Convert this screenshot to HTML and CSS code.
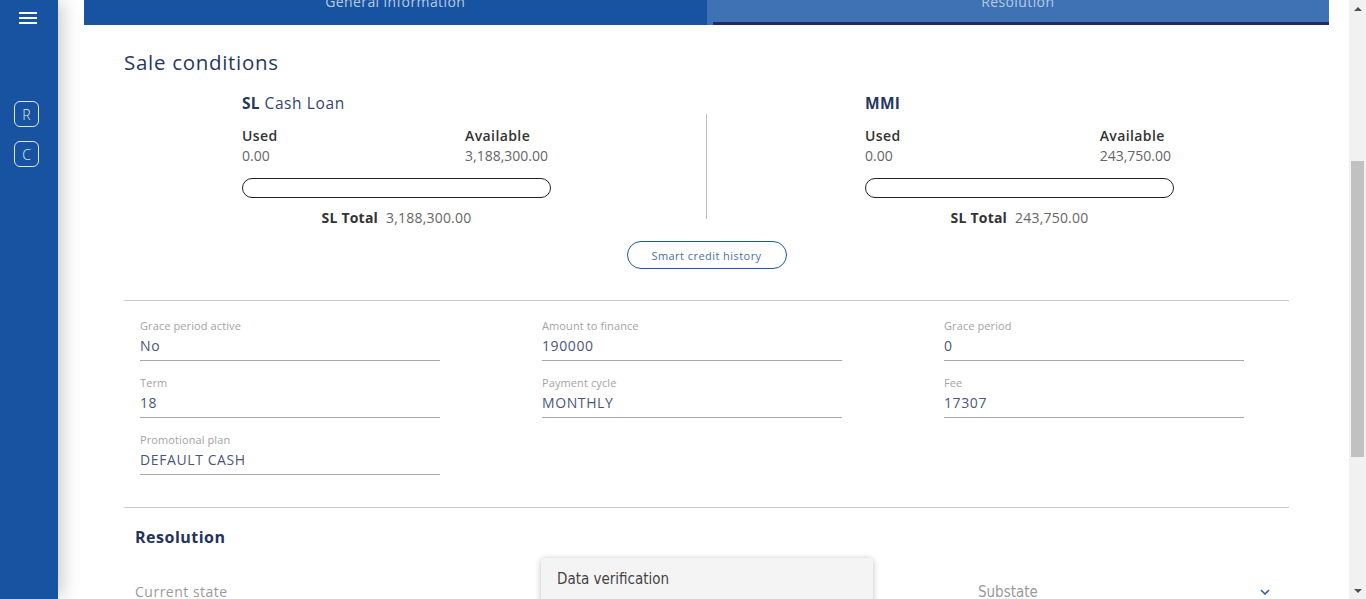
FILE: index.html
```html
<!DOCTYPE html>
<html lang="en">
<head>
<meta charset="utf-8">
<title>Sale conditions</title>
<link rel="stylesheet" href="styles.css">
</head>
<body>
<div class="app">
  <aside class="sidebar">
    <button class="menu-btn" aria-label="Menu">
      <svg width="18" height="13" viewBox="0 0 18 13"><rect x="0" y="0" width="18" height="2" fill="#fff"/><rect x="0" y="5" width="18" height="2" fill="#fff"/><rect x="0" y="10" width="18" height="2" fill="#fff"/></svg>
    </button>
    <div class="side-badges">
      <span class="badge">R</span>
      <span class="badge">C</span>
    </div>
  </aside>

  <main class="main">
    <nav class="tabs">
      <div class="tab tab-general">General information</div>
      <div class="tab tab-resolution">Resolution</div>
    </nav>

    <section class="card">
      <h1 class="title">Sale conditions</h1>

      <div class="limits">
        <div class="limit limit-left">
          <div class="limit-name"><b>SL</b> Cash Loan</div>
          <div class="limit-cols">
            <div class="col"><div class="col-head">Used</div><div class="col-val">0.00</div></div>
            <div class="col"><div class="col-head">Available</div><div class="col-val">3,188,300.00</div></div>
          </div>
          <div class="bar"></div>
          <div class="total"><b>SL Total</b><span>3,188,300.00</span></div>
        </div>
        <div class="vdivider"></div>
        <div class="limit limit-right">
          <div class="limit-name"><b>MMI</b></div>
          <div class="limit-cols">
            <div class="col"><div class="col-head">Used</div><div class="col-val">0.00</div></div>
            <div class="col"><div class="col-head">Available</div><div class="col-val">243,750.00</div></div>
          </div>
          <div class="bar"></div>
          <div class="total"><b>SL Total</b><span>243,750.00</span></div>
        </div>
      </div>

      <div class="btn-row"><button class="outline-btn">Smart credit history</button></div>

      <hr class="divider divider-top">

      <div class="fields">
        <div class="field"><div class="f-label">Grace period active</div><div class="f-value">No</div></div>
        <div class="field"><div class="f-label">Amount to finance</div><div class="f-value">190000</div></div>
        <div class="field"><div class="f-label">Grace period</div><div class="f-value">0</div></div>
        <div class="field"><div class="f-label">Term</div><div class="f-value">18</div></div>
        <div class="field"><div class="f-label">Payment cycle</div><div class="f-value">MONTHLY</div></div>
        <div class="field"><div class="f-label">Fee</div><div class="f-value">17307</div></div>
        <div class="field"><div class="f-label">Promotional plan</div><div class="f-value">DEFAULT CASH</div></div>
      </div>

      <hr class="divider divider-bottom">

      <div class="resolution">
        <h2 class="res-title">Resolution</h2>
        <div class="res-row">
          <div class="res-current">Current state</div>
          <div class="res-sub">
            <span>Substate</span>
            <svg class="chev" width="10" height="6" viewBox="0 0 10 6"><path d="M1 1 L5 5 L9 1" fill="none" stroke="#2f5fa8" stroke-width="1.6"/></svg>
          </div>
          <div class="dropdown"><div class="dd-item">Data verification</div></div>
        </div>
      </div>
    </section>
  </main>

  <div class="scrollbar" aria-hidden="true">
    <div class="sb-btn"><span class="tri-up"></span></div>
    <div class="sb-track"><div class="sb-thumb"></div></div>
    <div class="sb-btn"><span class="tri-down"></span></div>
  </div>
</div>
</body>
</html>
```

FILE: styles.css
```css
* { box-sizing: border-box; }
html, body { margin: 0; padding: 0; height: 100%; overflow: hidden; background: #fff; }
body { font-family: "Open Sans", "Noto Sans", sans-serif; color: #333; }

.app { display: flex; height: 599px; }

/* Sidebar */
.sidebar {
  width: 58px; flex: 0 0 58px; background: #1753a0;
  display: flex; flex-direction: column; align-items: flex-start; padding-left: 14px;
  box-shadow: 6px 0 18px -2px rgba(0,0,0,0.22);
  position: relative; z-index: 2;
}
.menu-btn { background: none; border: 0; padding: 0; margin: 12px 0 0 5px; width: 18px; height: 13px; display: block; }
.menu-btn svg { display: block; }
.side-badges { margin-top: 76px; display: flex; flex-direction: column; gap: 14px; }
.badge {
  width: 25px; height: 26px; border: 1.5px solid #dde6f2; border-radius: 6px;
  color: #e6edf7; font-size: 14px; font-weight: 300;
  display: flex; align-items: center; justify-content: center;
}

/* Main */
.main { flex: 1; padding: 0 20px 0 26px; min-width: 0; }
.tabs { display: flex; height: 48px; margin-top: -23px; }
.tab { flex: 1; color: #b8cbe6; font-size: 14px; letter-spacing: 0.4px; display: flex; justify-content: center; padding-top: 15px; }
.tab-general { background: #1753a0; }
.tab-resolution {
  background: linear-gradient(#1f2c66, #1f2c66) 6px 100% / calc(100% - 6px) 3px no-repeat, #3e72b4;
}

.card { padding: 0 40px; }
.title { margin: 25px 0 0; font-size: 20.5px; line-height: 24px; font-weight: 400; color: #27385f; letter-spacing: 0.7px; }

.limits { display: grid; grid-template-columns: 118px 309px 155px 1px 158px 309px 1fr; margin-top: 19px; }
.limit-left { grid-column: 2; }
.vdivider { grid-column: 4; background: #bdbdbd; margin-top: 21px; height: 105px; }
.limit-right { grid-column: 6; }

.limit-name { font-size: 15.5px; line-height: 20px; color: #34446e; letter-spacing: 0.6px; }
.limit-name b { font-weight: 700; color: #27385f; letter-spacing: 0.3px; }
.limit-cols { display: flex; justify-content: space-between; margin-top: 14px; padding-right: 3px; }
.col-head { font-size: 14px; line-height: 18px; font-weight: 600; color: #333; letter-spacing: 0.4px; }
.col-val { margin-top: 2px; font-size: 14px; line-height: 18px; color: #666; }
.bar { margin-top: 13px; height: 20px; border: 1px solid #222; border-radius: 10px; }
.total { margin-top: 11px; display: flex; justify-content: center; gap: 8px; font-size: 14px; line-height: 18px; }
.total b { color: #333; font-weight: 700; letter-spacing: 0.2px; }
.total span { color: #666; letter-spacing: 0.2px; }

.btn-row { display: flex; justify-content: center; margin-top: 14px; }
.outline-btn {
  width: 160px; height: 28px; border: 1px solid #1d57a3; border-radius: 14px; background: #fff;
  font-family: inherit; font-size: 11px; letter-spacing: 0.45px; color: #4a70ad; padding: 0;
}

.divider { border: 0; height: 1px; background: #c9c9c9; margin: 0; }
.divider-top { margin-top: 31px; }
.divider-bottom { margin-top: 32px; }

.fields {
  display: grid; grid-template-columns: repeat(3, 300px); column-gap: 102px; row-gap: 15px;
  padding-left: 16px; margin-top: 18px;
}
.field { border-bottom: 1px solid #a8a8a8; padding-bottom: 4px; }
.f-label { font-size: 11px; line-height: 14px; color: #a3a3a3; letter-spacing: 0.1px; }
.f-value { margin-top: 3px; font-size: 14px; line-height: 20px; color: #4b5679; letter-spacing: 0.6px; }

.resolution { padding-left: 11px; }
.res-title { margin: 19px 0 0; font-size: 16px; line-height: 20px; font-weight: 700; color: #22325c; letter-spacing: 0.5px; }
.res-row { position: relative; display: flex; margin-top: 36px; font-size: 14px; line-height: 18px; }
.res-current { width: 843px; color: #9a9a9a; letter-spacing: 0.5px; }
.res-sub { width: 294px; display: flex; justify-content: space-between; align-items: center;
  font-family: "DejaVu Sans Condensed", "Liberation Sans Narrow", sans-serif; font-stretch: condensed; color: #9a9a9a; font-size: 15px; }
.chev { margin-right: 2px; }
.dropdown {
  position: absolute; left: 406px; top: -25px; width: 332px; height: 60px;
  background: #f4f4f4; border-radius: 4px; box-shadow: 0 1px 6px rgba(0,0,0,0.25);
}
.dd-item { padding: 12px 16px; font-family: "DejaVu Sans Condensed", "Liberation Sans Narrow", sans-serif; font-stretch: condensed; font-size: 15px; color: #444; }

/* Fake scrollbar */
.scrollbar { width: 17px; flex: 0 0 17px; background: #f1f1f1; display: flex; flex-direction: column; }
.sb-btn { height: 17px; display: flex; align-items: center; justify-content: center; }
.tri-up { width: 0; height: 0; border-left: 4px solid transparent; border-right: 4px solid transparent; border-bottom: 4px solid #505050; }
.tri-down { width: 0; height: 0; border-left: 4px solid transparent; border-right: 4px solid transparent; border-top: 4px solid #505050; }
.sb-track { flex: 1; }
.sb-thumb { margin: 144px 2px 0; height: 296px; background: #c1c1c1; }
```
